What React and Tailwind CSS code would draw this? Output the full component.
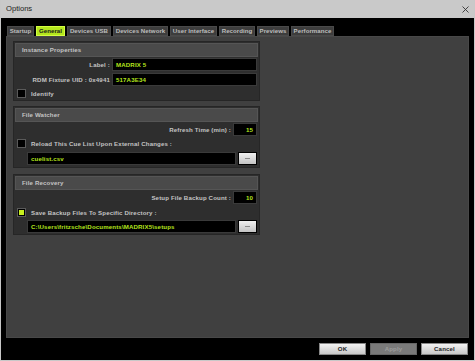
import React from 'react'

const tabs = [
    { name: 'Startup', w: 'w-[27px]' },
    { name: 'General', w: 'w-[29px]', active: true },
    { name: 'Devices USB', w: 'w-[44px]' },
    { name: 'Devices Network', w: 'w-[55px]' },
    { name: 'User Interface', w: 'w-[47px]' },
    { name: 'Recording', w: 'w-[36px]' },
    { name: 'Previews', w: 'w-[32px]' },
    { name: 'Performance', w: 'w-[43px]' },
]

const Field = ({ value, className = '', right }) => (
    <div className={`h-[13px] bg-black border border-[#3a3a3a] flex items-center px-[3px] text-[#b5e61d] whitespace-nowrap ${right ? 'justify-end' : ''} ${className}`}>
        {value}
    </div>
)

const Check = ({ checked }) => (
    <div className="w-[9px] h-[9px] bg-black border border-[#5a5a5a] flex items-center justify-center shrink-0">
        {checked && <div className="w-[5px] h-[5px] bg-[#c8f01e]" />}
    </div>
)

const Browse = () => (
    <div className="w-[19px] h-[13px] border border-black bg-gradient-to-b from-[#f0f0f0] to-[#c4c4c4] flex items-center justify-center">
        <div className="w-[5px] h-[1px] bg-[#8a8a8a]" />
    </div>
)

const Group = ({ title, className = '', children }) => (
    <div className={`w-[247px] bg-[#2e2e2e] border border-[#262626] p-[1px] flex flex-col ${className}`}>
        <div className="h-[14px] bg-[#4a4a4a] border border-[#555] flex items-center pl-[6px] text-[#c4c4c4]">{title}</div>
        {children}
    </div>
)

export default function App() {
    return (
        <div className="w-[475px] h-[361px] flex flex-col bg-black border-x border-b border-[#c8c8c8] font-['Liberation_Sans',Arial,sans-serif] text-[6.1px] tracking-[0.15px] font-bold overflow-hidden whitespace-nowrap">
            <div className="h-[18px] shrink-0 bg-[#c9c9c9] flex items-center justify-between pl-[6px] pr-[6px] -mx-px">
                <span className="text-[7.6px] tracking-normal font-normal text-[#222]">Options</span>
                <svg width="7" height="7" viewBox="0 0 7 7" className="text-[#333]">
                    <path d="M0.5 0.5 L6.5 6.5 M6.5 0.5 L0.5 6.5" stroke="currentColor" strokeWidth="0.9" />
                </svg>
            </div>

            <div className="flex-1 flex flex-col px-[5px] pt-[8px]">
                <div className="flex gap-[2px] ml-[1px] h-[10px]">
                    {tabs.map(t => (
                        <div
                            key={t.name}
                            className={`${t.w} h-[10px] flex items-center justify-center border tracking-[0.05px] ${t.active ? 'bg-[#b4e61e] border-[#d4ff40] text-[#1a1a1a]' : 'bg-[#3d3d3d] border-[#4a4a4a] text-[#bdbdbd]'}`}
                        >
                            {t.name}
                        </div>
                    ))}
                </div>

                <div className="h-[302px] bg-[#404040] border border-[#484848] pt-[4px] pl-[6px]">
                    <Group title="Instance Properties" className="h-[60px]">
                        <div className="flex items-center mt-[1px] pr-[1px]">
                            <span className="w-[97px] text-right pr-[2px] text-[#c4c4c4]">Label :</span>
                            <Field value="MADRIX 5" className="flex-1" />
                        </div>
                        <div className="flex items-center mt-[2px] pr-[1px]">
                            <span className="w-[97px] text-right pr-[2px] text-[#c4c4c4]">RDM Fixture UID : 0x4941</span>
                            <Field value="517A3E34" className="flex-1" />
                        </div>
                        <div className="flex items-center gap-[5px] mt-[3px] pl-[2px] text-[#c4c4c4]">
                            <Check />
                            <span>Identify</span>
                        </div>
                    </Group>

                    <Group title="File Watcher" className="h-[62px] mt-[5px]">
                        <div className="flex items-center justify-end mt-[1px] pr-[1px]">
                            <span className="pr-[2px] text-[#c4c4c4]">Refresh Time (min) :</span>
                            <Field value="15" right className="w-[24px]" />
                        </div>
                        <div className="flex items-center gap-[5px] mt-[3px] pl-[2px] text-[#c4c4c4]">
                            <Check />
                            <span>Reload This Cue List Upon External Changes :</span>
                        </div>
                        <div className="flex items-center gap-[2px] mt-[4px] pl-[12px] pr-[1px]">
                            <Field value="cuelist.csv" className="flex-1" />
                            <Browse />
                        </div>
                    </Group>

                    <Group title="File Recovery" className="h-[61px] mt-[6px]">
                        <div className="flex items-center justify-end mt-[1px] pr-[1px]">
                            <span className="pr-[2px] text-[#c4c4c4]">Setup File Backup Count :</span>
                            <Field value="10" right className="w-[24px]" />
                        </div>
                        <div className="flex items-center gap-[5px] mt-[4px] pl-[2px] text-[#c4c4c4]">
                            <Check checked />
                            <span>Save Backup Files To Specific Directory :</span>
                        </div>
                        <div className="flex items-center gap-[2px] mt-[3px] pl-[12px] pr-[1px]">
                            <Field value="C:\Users\fritzsche\Documents\MADRIX5\setups" className="flex-1" />
                            <Browse />
                        </div>
                    </Group>
                </div>

                <div className="flex justify-end gap-[4px] mt-[5px] pr-[1px]">
                    <div className="w-[47px] h-[12px] bg-gradient-to-b from-[#f2f2f2] to-[#c8c8c8] border border-[#888] flex items-center justify-center text-[#222]">OK</div>
                    <div className="w-[47px] h-[12px] bg-[#7a7a7a] border border-[#666] flex items-center justify-center text-[#9c9c9c]">Apply</div>
                    <div className="w-[47px] h-[12px] bg-gradient-to-b from-[#f2f2f2] to-[#c8c8c8] border border-[#888] flex items-center justify-center text-[#222]">Cancel</div>
                </div>
            </div>
        </div>
    )
}
